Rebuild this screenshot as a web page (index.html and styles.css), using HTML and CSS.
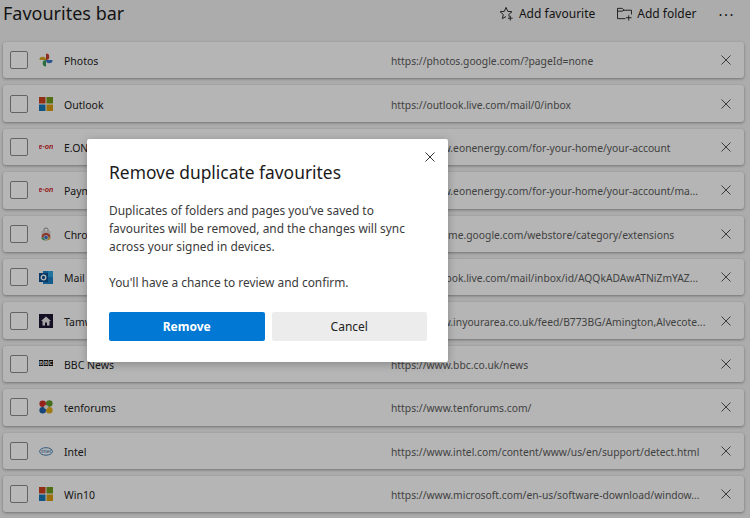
FILE: index.html
```html
<!DOCTYPE html>
<html lang="en">
<head>
  <meta charset="UTF-8">
  <title>Favourites bar</title>
  <link rel="stylesheet" href="styles.css">
</head>
<body>

  <div class="page">
    <header class="topbar">
      <h1 class="title">Favourites bar</h1>
      <div class="actions">
        <span class="action">
          <svg class="action-icon" viewBox="0 0 16 16"><path d="M7.500 1.500l1.800 4.200 4.500.4-3.400 3 .6 2.400M7.500 11.200l-3.900 2.300 1-4.400-3.400-3 4.500-.4 1.800-4.200M12 10.500v5M9.500 13h5"/></svg>
          Add favourite
        </span>
        <span class="action">
          <svg class="action-icon" viewBox="0 0 16 16"><path d="M9 13.500H.5v-11h5l2 2h8V9M.5 5.500h5l2-1M12.500 10v5.500M9.500 12.500h6"/></svg>
          Add folder
        </span>
        <span class="more">···</span>
      </div>
    </header>

    <ul class="list">
      <li class="row">
        <span class="check"></span>
        <svg class="fav" viewBox="0 0 16 16"><path fill="#d9a520" d="M8 8H.5a3.750 3.750 0 0 1 7.500 0z"/><path fill="#c8402f" d="M8 8V.5a3.750 3.750 0 0 1 0 7.500z"/><path fill="#3f74c9" d="M8 8h7.500a3.750 3.750 0 0 1-7.500 0z"/><path fill="#3a9a55" d="M8 8v7.500a3.750 3.750 0 0 1 0-7.500z"/></svg>
        <span class="name">Photos</span>
        <span class="url">https://photos.google.com/?pageId=none</span>
        <svg class="remove" viewBox="0 0 10 10"><path d="M.5.500l9 9M9.500.500l-9 9"/></svg>
      </li>
      <li class="row">
        <span class="check"></span>
        <svg class="fav" viewBox="0 0 14 14"><rect width="6.500" height="6.500" fill="#c8401f"/><rect x="7.500" width="6.500" height="6.500" fill="#6f9a1d"/><rect y="7.500" width="6.500" height="6.500" fill="#1477b8"/><rect x="7.500" y="7.500" width="6.500" height="6.500" fill="#d99a10"/></svg>
        <span class="name">Outlook</span>
        <span class="url">https://outlook.live.com/mail/0/inbox</span>
        <svg class="remove" viewBox="0 0 10 10"><path d="M.5.500l9 9M9.500.500l-9 9"/></svg>
      </li>
      <li class="row">
        <span class="check"></span>
        <svg class="fav" viewBox="0 0 14 14"><text class="eon" x="7" y="9" text-anchor="middle">e·on</text></svg>
        <span class="name">E.ON</span>
        <span class="url">https://www.eonenergy.com/for-your-home/your-account</span>
        <svg class="remove" viewBox="0 0 10 10"><path d="M.5.500l9 9M9.500.500l-9 9"/></svg>
      </li>
      <li class="row">
        <span class="check"></span>
        <svg class="fav" viewBox="0 0 14 14"><text class="eon" x="7" y="9" text-anchor="middle">e·on</text></svg>
        <span class="name">Payments</span>
        <span class="url">https://www.eonenergy.com/for-your-home/your-account/ma...</span>
        <svg class="remove" viewBox="0 0 10 10"><path d="M.5.500l9 9M9.500.500l-9 9"/></svg>
      </li>
      <li class="row">
        <span class="check"></span>
        <svg class="fav" viewBox="0 0 14 14"><path fill="none" stroke="#8c8c8c" d="M5 4V2.500a2 1.500 0 0 1 4 0V4"/><rect x="2.500" y="4" width="9" height="4" fill="#d4d4d4"/><path fill="#c8402f" d="M2.500 10.500a4.500 4.500 0 0 1 9 0z"/><path fill="#d9a520" d="M11.500 10.500a4.500 3 0 0 1-4.500 3v-3z"/><path fill="#3a9a55" d="M2.500 10.500a4.500 3 0 0 0 4.500 3v-3z"/><circle cx="7" cy="10.500" r="2.200" fill="#3f74c9" stroke="#eee" stroke-width=".7"/></svg>
        <span class="name">Chrome</span>
        <span class="url">https://chrome.google.com/webstore/category/extensions</span>
        <svg class="remove" viewBox="0 0 10 10"><path d="M.5.500l9 9M9.500.500l-9 9"/></svg>
      </li>
      <li class="row">
        <span class="check"></span>
        <svg class="fav" viewBox="0 0 14 14"><rect x="4" y="1" width="10" height="13" fill="#1c7fc4"/><rect x="9" y="1" width="5" height="6" fill="#2da3dc"/><rect y="3" width="9" height="9" fill="#10508f"/><circle cx="4.500" cy="7.500" r="2.300" fill="none" stroke="#fff" stroke-width="1.300"/></svg>
        <span class="name">Mail</span>
        <span class="url">https://outlook.live.com/mail/inbox/id/AQQkADAwATNiZmYAZ...</span>
        <svg class="remove" viewBox="0 0 10 10"><path d="M.5.500l9 9M9.500.500l-9 9"/></svg>
      </li>
      <li class="row">
        <span class="check"></span>
        <svg class="fav" viewBox="0 0 14 14"><rect width="14" height="14" fill="#1d1630"/><path fill="#e6e6e6" d="M7 2.500l5 4.500h-1.500v4.500h-2.500V8.500H6v3H3.500V7H2z"/></svg>
        <span class="name">Tamworth</span>
        <span class="url">https://www.inyourarea.co.uk/feed/B773BG/Amington,Alvecote...</span>
        <svg class="remove" viewBox="0 0 10 10"><path d="M.5.500l9 9M9.500.500l-9 9"/></svg>
      </li>
      <li class="row">
        <span class="check"></span>
        <svg class="fav" viewBox="0 0 14 14"><rect y="3" width="4.300" height="6" fill="#111"/><rect x="4.850" y="3" width="4.300" height="6" fill="#111"/><rect x="9.700" y="3" width="4.300" height="6" fill="#111"/><text class="bbc" x="2.150" y="7.800" text-anchor="middle">B</text><text class="bbc" x="7" y="7.800" text-anchor="middle">B</text><text class="bbc" x="11.850" y="7.800" text-anchor="middle">C</text></svg>
        <span class="name">BBC News</span>
        <span class="url">https://www.bbc.co.uk/news</span>
        <svg class="remove" viewBox="0 0 10 10"><path d="M.5.500l9 9M9.500.500l-9 9"/></svg>
      </li>
      <li class="row">
        <span class="check"></span>
        <svg class="fav" viewBox="0 0 14 14"><circle cx="3.700" cy="3.700" r="3.300" fill="#d03028"/><circle cx="10.300" cy="3.500" r="3.300" fill="#5f9a2a"/><circle cx="3.700" cy="10.300" r="3.300" fill="#1f62a8"/><circle cx="10.300" cy="10.300" r="3.300" fill="#e0a818"/><circle cx="7" cy="7" r="2" fill="#e8e8e8"/></svg>
        <span class="name">tenforums</span>
        <span class="url">https://www.tenforums.com/</span>
        <svg class="remove" viewBox="0 0 10 10"><path d="M.5.500l9 9M9.500.500l-9 9"/></svg>
      </li>
      <li class="row">
        <span class="check"></span>
        <svg class="fav" viewBox="0 0 16 16"><ellipse cx="8" cy="8.500" rx="7.300" ry="4.300" fill="none" stroke="#2f6ea8"/><text class="intel" x="8" y="10.500" text-anchor="middle">intel</text></svg>
        <span class="name">Intel</span>
        <span class="url">https://www.intel.com/content/www/us/en/support/detect.html</span>
        <svg class="remove" viewBox="0 0 10 10"><path d="M.5.500l9 9M9.500.500l-9 9"/></svg>
      </li>
      <li class="row">
        <span class="check"></span>
        <svg class="fav" viewBox="0 0 14 14"><rect width="6.500" height="6.500" fill="#c8401f"/><rect x="7.500" width="6.500" height="6.500" fill="#6f9a1d"/><rect y="7.500" width="6.500" height="6.500" fill="#1477b8"/><rect x="7.500" y="7.500" width="6.500" height="6.500" fill="#d99a10"/></svg>
        <span class="name">Win10</span>
        <span class="url">https://www.microsoft.com/en-us/software-download/window...</span>
        <svg class="remove" viewBox="0 0 10 10"><path d="M.5.500l9 9M9.500.500l-9 9"/></svg>
      </li>
    </ul>
  </div>

  <div class="overlay">
    <div class="dialog">
      <svg class="dialog-close" viewBox="0 0 10 10"><path d="M.5.500l9 9M9.500.500l-9 9"/></svg>
      <h2 class="dialog-title">Remove duplicate favourites</h2>
      <p class="dialog-text">Duplicates of folders and pages you’ve saved to favourites will be removed, and the changes will sync across your signed in devices.</p>
      <p class="dialog-text">You'll have a chance to review and confirm.</p>
      <div class="buttons">
        <button class="btn btn-primary">Remove</button>
        <button class="btn">Cancel</button>
      </div>
    </div>
  </div>

</body>
</html>
```

FILE: styles.css
```css
* {
  box-sizing: border-box;
}
html, body {
  margin: 0;
  height: 100%;
  overflow: hidden;
}
body {
  font-family: "Noto Sans", "Open Sans", sans-serif;
  background-color: #efefef;
  color: #1b1b1b;
}
.page {
  padding: 0 6px 0 3px;
}
.topbar {
  display: flex;
  align-items: center;
  justify-content: space-between;
  height: 42px;
  padding-bottom: 17px;
}
.title {
  margin: 0;
  font-size: 18px;
  font-weight: 400;
}
.actions {
  display: flex;
  align-items: center;
  font-size: 12px;
  padding-top: 2px;
  padding-right: 9px;
}
.action {
  display: flex;
  align-items: center;
  gap: 5px;
  margin-right: 22px;
}
.action-icon {
  width: 15px;
  height: 15px;
  fill: none;
  stroke: #222;
  stroke-width: 1;
}
.more {
  font-size: 15px;
  letter-spacing: 1.5px;
}
.list {
  list-style: none;
  margin: 0;
  padding: 0;
}
.row {
  display: flex;
  align-items: center;
  height: 36.4px;
  margin-bottom: 7px;
  padding-left: 7px;
  background-color: #fbfbfb;
  border-radius: 3px;
  box-shadow: 0 1px 3px rgba(0, 0, 0, 0.35);
}
.check {
  flex: none;
  width: 18px;
  height: 18px;
  border: 1px solid #8a8a8a;
  border-radius: 2px;
  background-color: #fff;
}
.fav {
  flex: none;
  width: 14px;
  height: 14px;
  margin-left: 11px;
}
.name {
  flex: none;
  width: 327px;
  margin-left: 11px;
  padding-top: 2px;
  font-size: 10.5px;
  color: #222;
}
.url {
  flex: 1;
  padding-top: 2px;
  font-size: 10.3px;
  color: #5a5a5a;
  white-space: nowrap;
}
.remove {
  flex: none;
  width: 10px;
  height: 10px;
  margin-right: 13px;
  stroke: #555;
  stroke-width: 1;
}
.eon {
  font-family: "Liberation Sans", sans-serif;
  font-size: 7px;
  font-weight: 700;
  font-style: italic;
  fill: #d0201a;
}
.bbc {
  font-family: "Liberation Sans", sans-serif;
  font-size: 5px;
  font-weight: 700;
  fill: #fff;
}
.intel {
  font-family: "Liberation Sans", sans-serif;
  font-size: 6px;
  fill: #2f6ea8;
}
.overlay {
  position: absolute;
  inset: 0;
  padding: 139px 0 0 87px;
  background-color: rgba(0, 0, 0, 0.28);
}
.dialog {
  position: relative;
  width: 361px;
  height: 223px;
  padding: 21px 21px 0 22px;
  background-color: #fff;
  border-radius: 2px;
  box-shadow: 0 2px 8px rgba(0, 0, 0, 0.25);
}
.dialog-close {
  position: absolute;
  top: 13px;
  right: 13px;
  width: 10px;
  height: 10px;
  stroke: #333;
  stroke-width: 1;
}
.dialog-title {
  margin: 0 0 17px;
  font-size: 17.4px;
  line-height: 24px;
  font-weight: 400;
}
.dialog-text {
  max-width: 310px;
  margin: 0 0 18px;
  font-size: 11.9px;
  line-height: 18px;
  color: #3a3a3a;
}
.buttons {
  display: flex;
  gap: 7px;
  margin-top: 21px;
}
.btn {
  flex: 1;
  height: 29px;
  border: none;
  border-radius: 2px;
  background-color: #ececec;
  font-family: inherit;
  font-size: 12px;
  color: #222;
}
.btn-primary {
  background-color: #0078d4;
  color: #fff;
  font-weight: 700;
}
```
